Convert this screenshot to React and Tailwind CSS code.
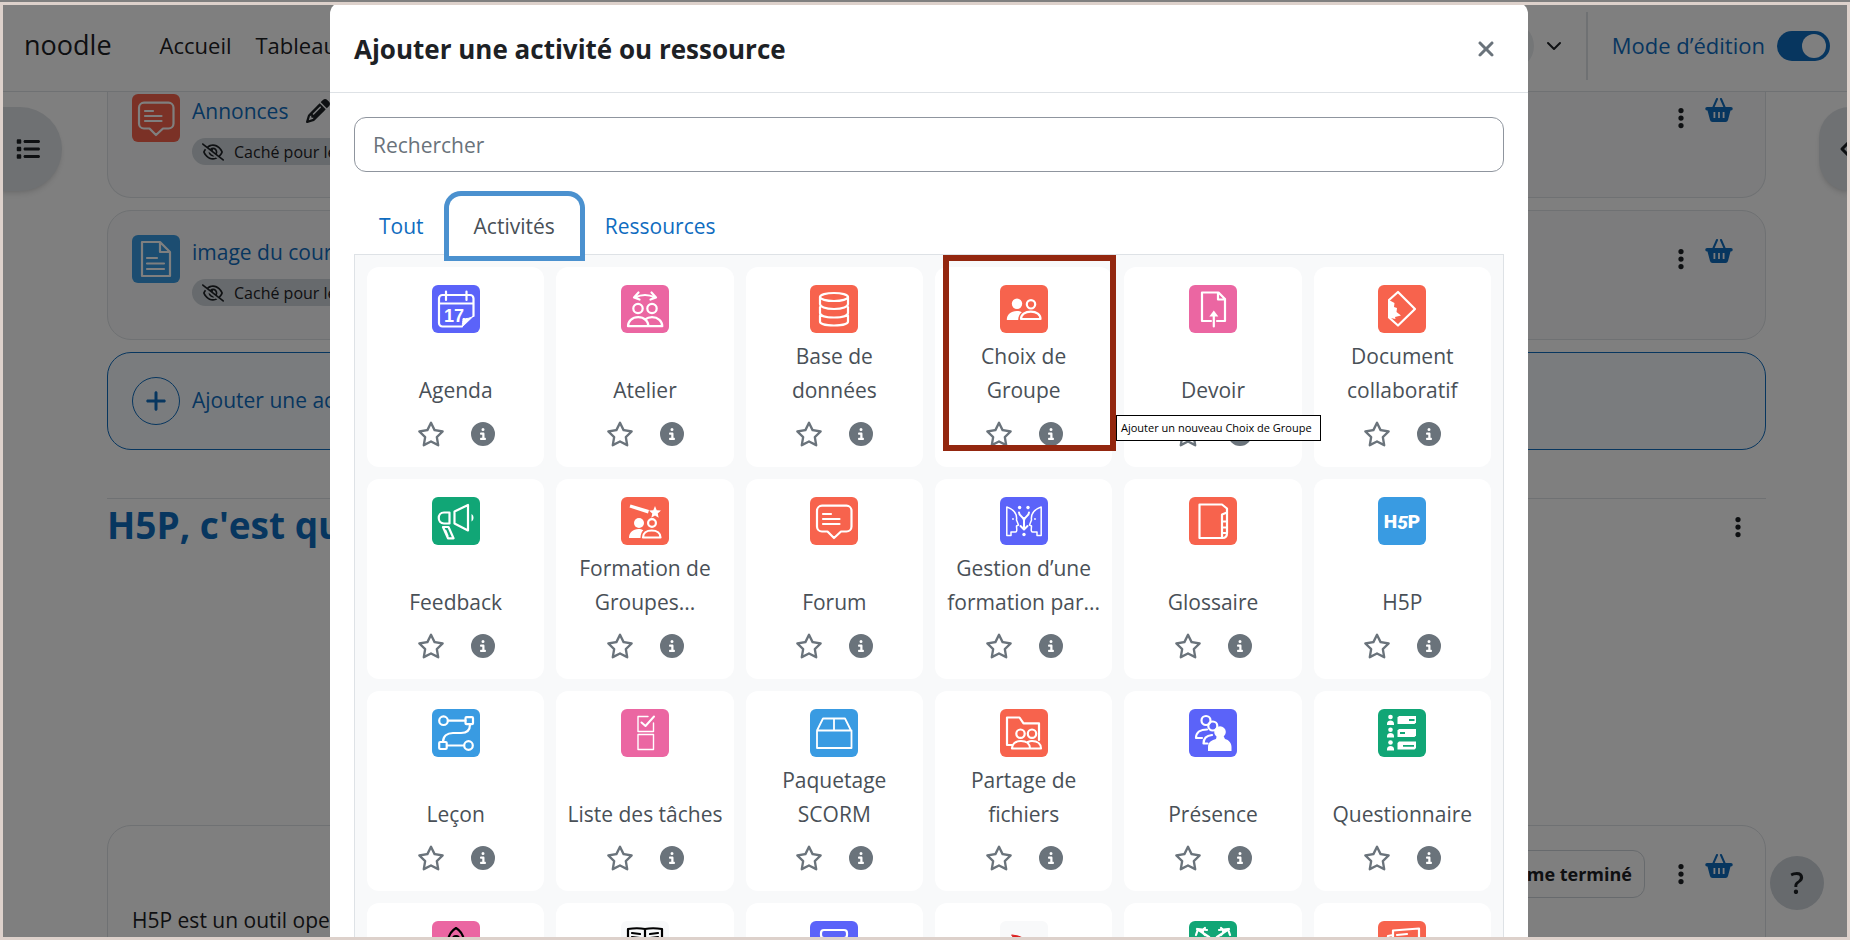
import React, { useState } from 'react';
import {
  FaList,
  FaRegStar,
  FaStar,
  FaCircleInfo,
  FaRegEyeSlash,
  FaPencil,
  FaEllipsisVertical,
  FaXmark,
  FaChevronLeft,
  FaPlus,
} from 'react-icons/fa6';
import { ChevronDown } from 'lucide-react';

// Activity icons, drawn on a 48x48 grid
const icons = {
  calendar: (
    <>
      <path d="M41.5 31V13.5A3.5 3.5 0 0 0 38 10H10.5A3.5 3.5 0 0 0 7 13.5v24.5a3.5 3.5 0 0 0 3.5 3.5H30M7 18.5h34.5M14 6.5V15M34.500 6.500V15" />
      <path d="M41.500 31l-11 10.500c-.5-3 .5-5 .5-8 3 .5 7.500 0 10.500-2.500z" fill="white" strokeWidth="1" />
      <text x="12" y="37" fontSize="18" fontWeight="700" fontFamily="Liberation Sans, sans-serif" fill="white" stroke="none">17</text>
    </>
  ),
  workshop: (
    <>
      <path d="M14 12.500q10-5 20 0M17.500 7.500L13 12.500l5.500 2M30.500 7.500L35 12.500l-5.500 2" />
      <circle cx="17" cy="23.500" r="4.700" />
      <circle cx="31" cy="23.500" r="4.700" />
      <path d="M7 41.200c0-5 4-9 10.200-9s10.200 4 10.200 9zM24 34.500c2-1.500 4-2.300 7-2.300 6 0 10.300 4 10.300 9H27" />
    </>
  ),
  database: (
    <>
      <ellipse cx="24" cy="12" rx="14" ry="4" />
      <path d="M10 12v7c0 2.500 5 5 14 5s14-2.500 14-5v-7M10 22v6c0 2.500 5 4.500 14 4.500S38 30.500 38 28v-6M10 30.500v6c0 2.300 5 4 14 4s14-1.700 14-4v-6" />
    </>
  ),
  groupChoice: (
    <>
      <g fill="white" stroke="none">
        <circle cx="17" cy="18.800" r="5.200" />
        <path d="M6.800 35c0-5.500 4-9 10-9 2 0 3.800.5 5 1.200-2.500 2-3.600 4.600-3.600 7.800z" />
      </g>
      <circle cx="31" cy="19.300" r="4.200" />
      <path d="M21 34c0-4.300 4-7.300 9.800-7.300s9.700 3 9.700 7.300z" />
    </>
  ),
  assign: (
    <>
      <path d="M22 36H13V7.500h16.500L36 14v22h-8M29 7.500V14.500h7" />
      <path d="M24.800 41.500V29" />
      <path d="M24.800 25.500l4.500 6h-9z" fill="white" stroke="none" />
    </>
  ),
  collab: (
    <>
      <path d="M11 15l9-8 17 17-17 16.500-9-8" />
      <path d="M10 14.500l6.500 3.500-.5 4 3 1-.5 4 4.500 3.500-6 1.500.5 2-7.500-1.500z" fill="white" stroke="none" />
    </>
  ),
  feedback: (
    <>
      <path d="M22.500 14.500L36 8v25.500l-13.500-7zM17.500 15.500v11H12c-7 0-7-11 0-11zM11 30h5.500l5 11.300h-5.500zM13.500 34l2 5" />
      <path d="M39.500 17c2.700 1.500 2.700 6 0 7.500z" fill="white" stroke="none" />
    </>
  ),
  groupFormation: (
    <>
      <path d="M9.500 7.500l18.500 5.500-1 3.500L8.500 10.500z" fill="white" stroke="none" />
      <path d="M34 9l1.700 4.200 4.300.3-3.300 3 1 4.300L34 18.500l-3.700 2.300 1-4.300-3.300-3 4.300-.3z" fill="white" stroke="none" />
      <circle cx="18" cy="26" r="5" fill="white" stroke="none" />
      <path d="M8 41c0-5.500 4-9 9.500-9 1.800 0 3.500.4 4.800 1.200-2 2-2.800 4.500-2.800 7.800z" fill="white" stroke="none" />
      <circle cx="31" cy="26" r="3.900" />
      <path d="M22 40.500c0-4.300 3.500-7 8.700-7s8.800 2.700 8.800 7z" />
    </>
  ),
  forum: (
    <path d="M12 8.700h24.500a5 5 0 0 1 5 5v15.800a5 5 0 0 1-5 5H31L24 41l-6.500-6.500H12a5 5 0 0 1-5-5V13.700a5 5 0 0 1 5-5zM13 17h8M13 22h16.500M13 27h16.500" />
  ),
  training: (
    <g strokeWidth="1.500">
      <path d="M6.800 10v28.500H11V35h4.500c2 0 1-4 1-6l2-1-2-5c1-7-4-11-9.700-13zM41.200 10v28.500H37V35h-4.500c-2 0-1-4-1-6l-2-1 2-5c-1-7 4-11 9.700-13z" />
      <path d="M19 15.500c0 4 5 4 5 8 0-4 5-4 5-8M24 21v10M20.500 29l3.500 3.500 3.500-3.500" strokeWidth="2" />
      <g fill="white" stroke="none">
        <circle cx="19.600" cy="10.500" r="1.700" />
        <circle cx="28" cy="10.500" r="1.700" />
        <circle cx="24" cy="37.500" r="1.700" />
        <circle cx="13" cy="22" r="0.900" />
        <circle cx="35" cy="22" r="0.900" />
      </g>
    </g>
  ),
  glossary: (
    <>
      <path d="M10.500 7.500H33l5 4V36c0 3-1.500 5-4.500 5h-23z" />
      <path d="M38 15.500l-5 2V41M33 24.500h4M33 30.500h4M33 36h3.500" />
    </>
  ),
  h5p: (
    <text x="24" y="31" textAnchor="middle" fontSize="19" fontWeight="900" fontFamily="Roboto, sans-serif" fill="white" stroke="none">
      H<tspan fontStyle="italic" dy="1">5</tspan><tspan dy="-1">P</tspan>
    </text>
  ),
  lesson: (
    <>
      <circle cx="11.500" cy="11.700" r="4.300" />
      <rect x="33.500" y="8.200" width="7.500" height="7" rx="1" />
      <path d="M16 11.700h17.500M38 15.500c0 6-3 8.500-9 8.500h-8c-6 0-10 3-10 9" />
      <rect x="7.200" y="33" width="7.500" height="7" rx="1" />
      <path d="M15 36.500h17" />
      <circle cx="36.500" cy="36.500" r="4.300" />
    </>
  ),
  checklist: (
    <g strokeWidth="1.400">
      <path d="M27 7.500H17v15h15.500V14M17 25.500h15.500v15H17z" />
      <path d="M20.500 13.500l4 3.500L33 7.500" strokeWidth="2" />
    </g>
  ),
  scorm: (
    <path d="M7 21.500h34.500V39H7zM7 21.500l6-12h22l6 12M24 9.500v12" strokeWidth="1.800" />
  ),
  folder: (
    <>
      <path d="M12 36H7V8.500h12.500l4 5.800h15.500V31" />
      <circle cx="20.500" cy="24.700" r="4.200" />
      <circle cx="32" cy="24.700" r="4.200" />
      <path d="M12 39.500c0-4.500 3.500-7.500 9-7.500s9 3 9 7.500zM28 33c1-.6 2.500-1 4-1 5.500 0 9 3 9 7.500H30" />
    </>
  ),
  presence: (
    <>
      <circle cx="17" cy="11.500" r="4.500" />
      <circle cx="23.800" cy="17" r="4.500" />
      <path d="M18 20.500c-6 0-11 2.500-11 8.500h6M23 26c-5 .5-8.500 3.500-8.500 8.500h4" />
      <circle cx="31" cy="23" r="5.800" fill="white" stroke="none" />
      <path d="M19 42v-4c0-5 4-7 8-8l1-4h6l2 4c4 1 6.500 4 6.500 8v4z" fill="white" stroke="none" />
    </>
  ),
  questionnaire: (
    <g fill="white" stroke="none">
      <circle cx="12.500" cy="8" r="2.300" />
      <path d="M9 16v-1.500c0-4 7-4 7 0V16z" />
      <path d="M21 7h17v6.500l-1.500 1.500H19.500V8.500z" />
      <circle cx="12.500" cy="20.700" r="2.300" />
      <path d="M9 28.500V27c0-4 7-4 7 0v1.500z" />
      <path d="M21 20h17v6.500L36.500 28h-17v-6.500z" />
      <circle cx="12.500" cy="33.500" r="2.300" />
      <path d="M9 41.500V40c0-4 7-4 7 0v1.500z" />
      <path d="M21 32.500h17V39l-1.500 1.500h-17V34z" />
      <path d="M31 10h5.500v2H31zM22 23h5v2h-5zM25 36h11v1.700H25z" fill="#11a676" />
    </g>
  ),
  rocket: <path d="M16 22c0-7 3-12 8-15 5 3 8 8 8 15v16H16zM21 18a3 3 0 0 1 6 0" stroke="black" />,
  book: (
    <path d="M7 8c6-1 12-1 17 0 5-1 11-1 17 0v30c-6-1-12-1-17 0-5-1-11-1-17 0zM24 8v30M11 12l8 1M11 16l8 1M29 13l8-1M29 17l8-1" stroke="black" />
  ),
  survey: <path d="M14 9h20q3 0 3 3v2q0 3-3 3H14q-3 0-3-3v-2q0-3 3-3zM13 19h22v20H13z" />,
  redShape: <path d="M12 14l6 1 5 2 7 2-4 5h-9l-2-5z" fill="#dc2020" stroke="#dc2020" strokeWidth="1" />,
  arrows: <path d="M7 14l2-6 9 1M8 8l12 8 4 5M41 14l-2-6-9 1M40 8l-12 8-4 5v18M16 7c-3 2-3 5 0 7M32 7c3 2 3 5 0 7" />,
  news: <path d="M15 9.500l26-2v26l-26 2zM15 14l-5 1v25l26-2v-3M19 14l10-1M19 20h4M32 18h4" />,
  page: <path d="M10 7h18l10 10v24H10zM28 7v10h10M15 23h10M15 28.500h17M15 34h17" />,
};

const activities = [
  { name: 'Agenda', icon: 'calendar', color: 'bg-[#5b63f9]' },
  { name: 'Atelier', icon: 'workshop', color: 'bg-[#eb66a2]' },
  { name: 'Base de données', icon: 'database', color: 'bg-[#f7634d]' },
  { name: 'Choix de Groupe', icon: 'groupChoice', color: 'bg-[#f7634d]', highlighted: true },
  { name: 'Devoir', icon: 'assign', color: 'bg-[#eb66a2]' },
  { name: 'Document collaboratif', icon: 'collab', color: 'bg-[#f7634d]' },
  { name: 'Feedback', icon: 'feedback', color: 'bg-[#11a676]' },
  { name: 'Formation de Groupes...', icon: 'groupFormation', color: 'bg-[#f7634d]' },
  { name: 'Forum', icon: 'forum', color: 'bg-[#f7634d]' },
  { name: 'Gestion d’une formation par...', icon: 'training', color: 'bg-[#5b63f9]' },
  { name: 'Glossaire', icon: 'glossary', color: 'bg-[#f7634d]' },
  { name: 'H5P', icon: 'h5p', color: 'bg-[#399be2]' },
  { name: 'Leçon', icon: 'lesson', color: 'bg-[#399be2]' },
  { name: 'Liste des tâches', icon: 'checklist', color: 'bg-[#eb66a2]' },
  { name: 'Paquetage SCORM', icon: 'scorm', color: 'bg-[#399be2]' },
  { name: 'Partage de fichiers', icon: 'folder', color: 'bg-[#f7634d]' },
  { name: 'Présence', icon: 'presence', color: 'bg-[#5b63f9]' },
  { name: 'Questionnaire', icon: 'questionnaire', color: 'bg-[#11a676]' },
  { name: '', icon: 'rocket', color: 'bg-[#eb66a2]' },
  { name: '', icon: 'book', color: 'bg-[#f8f9fa]' },
  { name: '', icon: 'survey', color: 'bg-[#5b63f9]' },
  { name: '', icon: 'redShape', color: 'bg-[#f8f9fa]' },
  { name: '', icon: 'arrows', color: 'bg-[#11a676]' },
  { name: '', icon: 'news', color: 'bg-[#f7634d]' },
];

function ActivityIcon({ color, children }) {
  return (
    <span className={`block size-12 shrink-0 rounded-md ${color}`}>
      <svg viewBox="0 0 48 48" className="size-12" fill="none" stroke="white" strokeWidth="2.200" strokeLinejoin="round" strokeLinecap="round">
        {children}
      </svg>
    </span>
  );
}

function Basket() {
  return (
    <svg viewBox="0 0 27 24" className="h-6 w-7 text-[#0f6cbf]" fill="none">
      <path d="M11.500 1L8 9M15.500 1L19 9" stroke="currentColor" strokeWidth="2" strokeLinecap="round" />
      <path
        fillRule="evenodd"
        d="M1.500 9h24a1.500 1.500 0 0 1 0 3.500H25L22.500 22q-.5 2-2.500 2H7q-2 0-2.500-2L2 12.500h-.5a1.500 1.500 0 0 1 0-3.500zM8 14v6h1.800v-6zM12.600 14v6h1.800v-6zM17.200 14v6H19v-6z"
        fill="currentColor"
      />
    </svg>
  );
}

function RowActions() {
  return (
    <div className="mt-1 flex items-start gap-3">
      <button aria-label="Modifier" className="mt-2"><FaEllipsisVertical className="size-6" /></button>
      <button aria-label="Copier dans le panier"><Basket /></button>
    </div>
  );
}

function CourseRow({ name, icon, color, editable, className }) {
  return (
    <div className={`flex items-start justify-between border-[#dee2e6] bg-[#f8f9fa] pl-6 pr-8 ${className}`}>
      <div className="flex gap-3">
        <ActivityIcon color={color}>{icons[icon]}</ActivityIcon>
        <div className="-mt-px">
          <div className="flex items-center gap-[18px]">
            <a href="#" className="text-[21px] leading-9 text-[#0f6cbf]">{name}</a>
            {editable && <FaPencil className="size-6" />}
          </div>
          <span className="mt-[9px] flex h-[27px] items-center gap-[10px] rounded-full bg-[#ced4da] px-[10px] text-base">
            <FaRegEyeSlash className="size-[22px]" />
            Caché pour les étudiants
          </span>
        </div>
      </div>
      <RowActions />
    </div>
  );
}

function CoursePage() {
  return (
    <div className="h-full overflow-hidden bg-white">
      <header className="flex h-[92px] items-center justify-between border-b border-[#dee2e6] pl-6 pr-5">
        <nav className="flex items-center text-[22px]">
          <a href="#" className="mr-12 text-[27px]">noodle</a>
          <a href="#" className="mr-6">Accueil</a>
          <a href="#">Tableau de bord</a>
        </nav>
        <div className="flex items-center">
          <span className="size-12 rounded-full bg-[#e9ecef]" />
          <button aria-label="Menu utilisateur" className="mx-2"><ChevronDown className="size-6" /></button>
          <span className="ml-3 mr-6 h-17 w-0.5 bg-[#dee2e6]" />
          <label className="flex items-center gap-3 text-[22px] text-[#0f6cbf]">
            Mode d’édition
            <input type="checkbox" defaultChecked className="peer sr-only" />
            <span className="flex h-[30px] w-[53px] items-center justify-end rounded-full bg-[#0f6cbf] p-1">
              <span className="size-6 rounded-full bg-white" />
            </span>
          </label>
        </div>
      </header>

      <div className="flex items-start justify-between">
        <button aria-label="Ouvrir l'index du cours" className="mt-[15px] flex h-[84px] w-[62px] shrink-0 items-center rounded-r-full bg-[#dee2e6] pl-4 shadow-md">
          <FaList className="size-6" />
        </button>

        <main className="ml-[45px] mr-[53px] min-w-0 flex-1">
          <CourseRow name="Annonces" icon="forum" color="bg-[#f7634d]" editable className="h-[106px] rounded-b-3xl border-x border-b pt-0.5" />
          <CourseRow name="image du cours" icon="page" color="bg-[#399be2]" className="mt-3 h-[130px] rounded-3xl border pt-6" />
          <button className="mt-3 flex h-[98px] w-full items-center gap-3 rounded-3xl border border-[#0f6cbf] bg-[#f5f9fc] pl-6 text-[21px] text-[#0f6cbf]">
            <span className="flex size-12 items-center justify-center rounded-full border border-[#0f6cbf]">
              <FaPlus className="size-6" />
            </span>
            Ajouter une activité ou ressource
          </button>

          <section className="mt-12 border-t border-[#dee2e6]">
            <div className="flex items-start justify-between pr-4">
              <h2 className="text-[37px] font-bold leading-[52px] text-[#0f6cbf]">H5P, c'est quoi ?</h2>
              <button aria-label="Modifier la section" className="mt-4"><FaEllipsisVertical className="size-6" /></button>
            </div>
            <div className="mt-[274px] h-60 rounded-3xl border border-[#dee2e6] pl-6 pr-8 pt-6">
              <div className="flex items-start justify-end gap-6">
                <button className="h-12 rounded-xl border border-[#ced4da] px-3 text-lg font-bold">Marquer comme terminé</button>
                <RowActions />
              </div>
              <p className="mt-1.5 text-[21px] leading-8">H5P est un outil open source</p>
            </div>
          </section>
        </main>

        <button aria-label="Ouvrir le tiroir des blocs" className="mt-[15px] flex h-[84px] w-[31px] shrink-0 items-center justify-end overflow-hidden rounded-l-full bg-[#dee2e6] shadow-md">
          <FaChevronLeft className="-mr-2.5 size-6 shrink-0" />
        </button>
      </div>

      <button className="fixed bottom-[30px] right-[26px] size-[54px] rounded-full bg-[#ced4da] text-[30px] font-semibold leading-none" aria-label="Aide">
        ?
      </button>
    </div>
  );
}

function ActivityCard({ name, icon, color, highlighted }) {
  const [starred, setStarred] = useState(false);

  return (
    <div className="relative flex h-[200px] flex-col items-center rounded-xl bg-white pt-[18px]">
      <a href="#" className="flex flex-col items-center text-center text-[21px] leading-[34px] text-[#495057]">
        <ActivityIcon color={color}>{icons[icon]}</ActivityIcon>
        <span className="mt-1.5 flex h-17 w-[158px] flex-col justify-end">
          <span>{name}</span>
        </span>
      </a>
      <div className="mt-[13px] flex items-center gap-[26px] text-[#6a737b]">
        <button aria-label="Favori" onClick={() => setStarred(!starred)}>
          {starred ? <FaStar className="size-7" /> : <FaRegStar className="size-7" />}
        </button>
        <button aria-label="Informations"><FaCircleInfo className="size-6" /></button>
      </div>

      {highlighted && (
        <>
          <div className="pointer-events-none absolute -right-1 -top-3 bottom-4 left-2 border-6 border-[#93270f]" />
          <div role="tooltip" className="absolute left-[181px] top-[148px] z-10 whitespace-nowrap border border-black bg-white py-0.5 pl-1 pr-2 text-[11px] leading-5 text-black">
            Ajouter un nouveau Choix de Groupe
          </div>
        </>
      )}
    </div>
  );
}

const tabs = ['Tout', 'Activités', 'Ressources'];

function ActivityChooser() {
  const [activeTab, setActiveTab] = useState('Activités');

  return (
    <div role="dialog" aria-label="Ajouter une activité ou ressource" className="mx-3 w-full max-w-[1198px] overflow-hidden rounded-t-xl bg-white">
      <div className="flex h-[91px] items-center justify-between border-b border-[#dee2e6] px-6 pt-1">
        <h1 className="text-[26px] font-bold leading-9 text-[#1d2125]">Ajouter une activité ou ressource</h1>
        <button aria-label="Fermer" className="mr-1.5 text-[#6a737b]"><FaXmark className="size-6" /></button>
      </div>

      <div className="p-6">
        <input
          type="text"
          aria-label="Rechercher"
          placeholder="Rechercher"
          className="block h-[55px] w-full rounded-xl border border-[#8f959e] px-[18px] text-[21px] placeholder:text-[#6a737b]"
        />

        <div role="tablist" className="-mb-0.5 mt-6 flex text-[21px]">
          {tabs.map((tab) => (
            <button
              key={tab}
              role="tab"
              aria-selected={activeTab === tab}
              onClick={() => setActiveTab(tab)}
              className={`h-[60px] px-[25px] pt-0.5 ${
                activeTab === tab
                  ? 'relative z-10 rounded-t-xl bg-white text-[#495057] ring-5 ring-[#4b91cf]'
                  : 'text-[#0f6cbf]'
              }`}
            >
              {tab}
            </button>
          ))}
        </div>

        <div className="grid grid-cols-6 gap-3 border border-[#dee2e6] bg-[#f8f9fa] p-3">
          {activities.map((activity, i) => (
            <ActivityCard key={i} {...activity} />
          ))}
        </div>
      </div>
    </div>
  );
}

export default function App() {
  return (
    <div className="relative h-screen overflow-hidden font-['Open_Sans',sans-serif] text-[#1d2125]">
      <CoursePage />

      {/* Backdrop and modal */}
      <div className="fixed inset-0 z-20 bg-black/50" />
      <div className="fixed inset-0 z-30 flex items-start justify-center overflow-hidden pl-2 pt-0.5">
        <ActivityChooser />
      </div>

      {/* Window frame */}
      <div className="pointer-events-none fixed inset-x-0 bottom-0 top-0.5 z-40 border-3 border-[#ddd1cb]" />
    </div>
  );
}
